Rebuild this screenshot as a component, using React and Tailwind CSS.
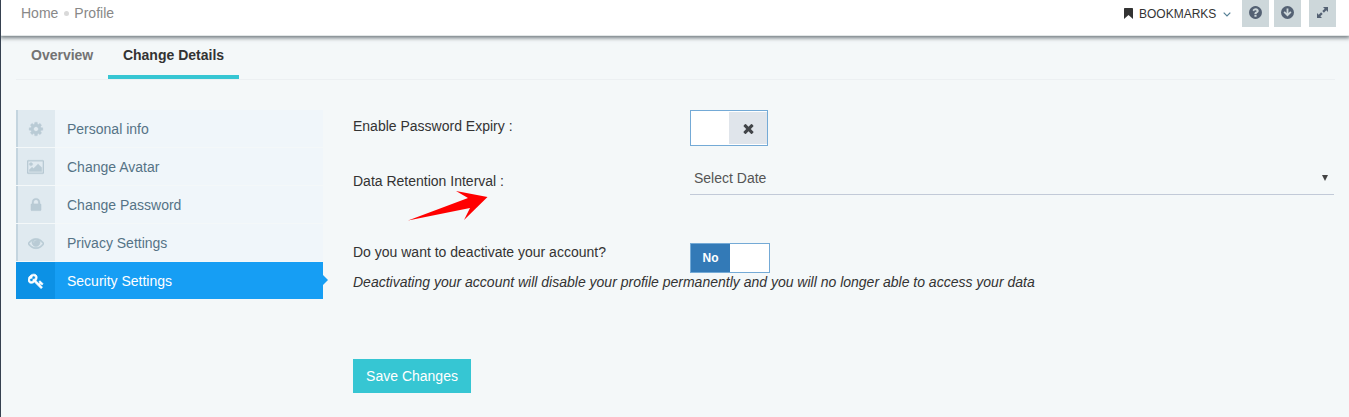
import React from "react";

const GEAR =
  "M1152 896q0-106-75-181t-181-75-181 75-75 181 75 181 181 75 181-75 75-181zm512-109v222q0 12-8 23t-20 13l-185 28q-19 54-39 91 35 50 107 138 10 12 10 25t-9 23q-27 37-99 108t-94 71q-12 0-26-9l-138-108q-44 23-91 38-16 136-29 186-7 28-36 28h-222q-14 0-24.5-8.5t-11.5-21.5l-28-184q-49-16-90-37l-141 107q-10 9-25 9-14 0-25-11-126-114-165-168-7-10-7-23 0-12 8-23 15-21 51-66.5t54-70.5q-27-50-41-99l-183-27q-13-2-21-12.5t-8-23.5v-222q0-12 8-23t19-13l186-28q14-46 39-92-40-57-107-138-10-12-10-24 0-10 9-23 26-36 98.5-107.5t94.5-71.5q13 0 26 10l138 107q44-23 91-38 16-136 29-186 7-28 36-28h222q14 0 24.5 8.5t11.5 21.5l28 184q49 16 90 37l142-107q9-9 24-9 13 0 25 10 129 119 165 170 7 8 7 22 0 12-8 23-15 21-51 66.5t-54 70.5q26 50 41 98l183 28q13 2 21 12.5t8 23.5z";
const PICTURE =
  "M576 576q0 80-56 136t-136 56-136-56-56-136 56-136 136-56 136 56 56 136zm1024 384v448h-1408v-192l320-320 160 160 512-512zm96-704h-1600q-13 0-22.5 9.5t-9.5 22.5v1216q0 13 9.5 22.5t22.5 9.5h1600q13 0 22.5-9.5t9.5-22.5v-1216q0-13-9.5-22.5t-22.5-9.5zm160 32v1216q0 66-47 113t-113 47h-1600q-66 0-113-47t-47-113v-1216q0-66 47-113t113-47h1600q66 0 113 47t47 113z";
const LOCK =
  "M640 768h512v-192q0-106-75-181t-181-75-181 75-75 181v192zm832 96v576q0 40-28 68t-68 28h-960q-40 0-68-28t-28-68v-576q0-40 28-68t68-28h32v-192q0-184 132-316t316-132 316 132 132 316v192h32q40 0 68 28t28 68z";
const EYE =
  "M1664 960q-152-236-381-353 61 104 61 225 0 185-131.5 316.5t-316.5 131.5-316.5-131.5-131.5-316.5q0-121 61-225-229 117-381 353 133 205 333.5 326.5t434.5 121.5 434.5-121.5 333.5-326.5zm-720-384q0-20-14-34t-34-14q-125 0-214.5 89.5t-89.5 214.5q0 20 14 34t34 14 34-14 14-34q0-86 61-147t147-61q20 0 34-14t14-34zm848 384q0 34-20 69-140 230-376.5 368.5t-499.5 138.5-499.5-139-376.5-368q-20-35-20-69t20-69q140-229 376.5-368t499.5-139 499.5 139 376.5 368q20 35 20 69z";
const KEY =
  "M832 512q0-80-56-136t-136-56-136 56-56 136q0 42 19 83-41-19-83-19-80 0-136 56t-56 136 56 136 136 56 136-56 56-136q0-42-19-83 41 19 83 19 80 0 136-56t56-136zm851 704q0 17-49 66t-66 49q-9 0-28.5-16t-36.5-33-38.5-40-24.5-26l-96 96 220 220q28 28 28 68 0 42-39 81t-81 39q-40 0-68-28l-671-671q-176 131-365 131-163 0-265.5-102.5t-102.5-265.5q0-160 95-313t248-248 313-95q163 0 265.5 102.5t102.5 265.5q0 189-131 365l355 355 96-96q-3-3-26-24.5t-40-38.5-33-36.5-16-28.5q0-17 49-66t66-49q13 0 23 10 6 6 46 44.5t82 79.5 86.5 86 73 78 28.5 41z";
const TIMES =
  "M1490 1322q0 40-28 68l-136 136q-28 28-68 28t-68-28l-294-294-294 294q-28 28-68 28t-68-28l-136-136q-28-28-28-68t28-68l294-294-294-294q-28-28-28-68t28-68l136-136q28-28 68-28t68 28l294 294 294-294q28-28 68-28t68 28l136 136q28 28 28 68t-28 68l-294 294 294 294q28 28 28 68z";
const QUESTION =
  "M1024 1376v-192q0-14-9-23t-23-9h-192q-14 0-23 9t-9 23v192q0 14 9 23t23 9h192q14 0 23-9t9-23zm256-672q0-88-55.5-163t-138.5-116-170-41q-243 0-371 213-15 24 8 42l132 100q7 6 19 6 16 0 25-12 53-68 86-92 34-24 86-24 48 0 85.5 26t37.5 59q0 38-20 61t-68 45q-63 28-115.5 86.5t-52.5 125.5v36q0 14 9 23t23 9h192q14 0 23-9t9-23q0-19 21.5-49.5t54.5-49.5q32-18 49-28.5t46-35 44.5-48 28-60.5 12.5-81zm384 192q0 209-103 385.5t-279.5 279.5-385.5 103-385.5-103-279.5-279.5-103-385.5 103-385.5 279.5-279.5 385.5-103 385.5 103 279.5 279.5 103 385.5z";

function Glyph({ d, className = "", box = "0 0 1792 1792", weight = 0 }) {
  return (
    <svg viewBox={box} fill="currentColor" stroke="currentColor" strokeWidth={weight} className={className} aria-hidden="true">
      <path d={d} />
    </svg>
  );
}

const MENU = [
  { label: "Personal info", d: GEAR, size: "size-4", weight: 30 },
  { label: "Change Avatar", d: PICTURE, size: "h-4 w-[17px]", box: "-64 0 1920 1792", weight: 40 },
  { label: "Change Password", d: LOCK, size: "size-4", weight: 30 },
  { label: "Privacy Settings", d: EYE, size: "size-4", weight: 70 },
  { label: "Security Settings", d: KEY, size: "size-4", weight: 90, active: true },
];

function MenuItem({ label, d, size, box, weight, active }) {
  return (
    <li
      className={
        active
          ? "relative flex h-[37px] items-center bg-[#169ef4] text-white"
          : "flex h-[37px] items-center border-l-2 border-[#c4d5df] bg-[#f0f6fa] text-[#557386]"
      }
    >
      <span
        className={
          active
            ? "flex h-full w-[39px] items-center justify-center bg-[#0c91e5]"
            : "flex h-full w-[37px] items-center justify-center bg-[#e0eaf0] pr-[2px] text-[#b9cbd5]"
        }
      >
        <Glyph d={d} box={box} weight={weight} className={size} />
      </span>
      <span className="ml-3 leading-[18px]">{label}</span>
      {active && (
        <svg viewBox="0 0 5 10" className="absolute top-[13px] left-full h-[10px] w-[5px]" aria-hidden="true">
          <path d="M0 0L5 5L0 10z" fill="#169ef4" />
        </svg>
      )}
    </li>
  );
}

function Header() {
  return (
    <header className="relative flex h-9 shrink-0 items-start justify-between border-b border-[#e3e7e8] bg-white shadow-[0_1px_4px_1px_rgba(70,80,85,0.75)]">
      <nav className="flex items-center pt-1 pl-5 text-[#888888]">
        <span className="leading-[18px]">Home</span>
        <span className="mr-[5px] ml-[6px] size-[5px] rounded-full bg-[#d9d9d9]" />
        <span className="leading-[18px]">Profile</span>
      </nav>
      <div className="flex items-start pr-[13px]">
        <svg viewBox="0 0 9 11" className="mt-[8px] h-[11px] w-[9px]" aria-hidden="true">
          <path d="M0 .7Q0 0 .7 0H8.3Q9 0 9 .7V11L4.500 7L0 11z" fill="#333333" />
        </svg>
        <span className="mt-[5px] ml-[6px] w-[78px] text-[12px] leading-[18px] whitespace-nowrap text-[#333333]">BOOKMARKS</span>
        <svg viewBox="0 0 8 5" className="mt-[12px] ml-[6px] h-[5px] w-2" fill="none" stroke="#557f95" strokeWidth="1.200" aria-hidden="true">
          <path d="M.7.7L4 4L7.300.7" />
        </svg>
        <button className="ml-[11px] flex h-[27px] w-[27px] justify-center bg-[#cdd7da] pt-[5px] text-[#546173]">
          <Glyph d={QUESTION} className="size-[15px]" />
        </button>
        <button className="ml-[5px] flex h-[27px] w-[27px] justify-center bg-[#cdd7da] pt-[6px]">
          <svg viewBox="0 0 12 12" className="size-[13px]" fill="none" aria-hidden="true">
            <circle cx="6" cy="6" r="6" fill="#546173" />
            <path d="M6 2.200V8.500M2.900 5.500L6 8.600L9.100 5.500" stroke="#cdd7da" strokeWidth="1.700" />
          </svg>
        </button>
        <button className="ml-2 flex h-[27px] w-[27px] justify-center bg-[#cdd7da] pt-[7px]">
          <svg viewBox="0 0 11 11" className="size-[11px]" aria-hidden="true">
            <path d="M6 0H11V5L9.300 3.300L6.900 5.700L5.300 4.100L7.700 1.700zM5 11H0V6L1.700 7.700L4.100 5.300L5.700 6.900L3.300 9.300z" fill="#546173" />
          </svg>
        </button>
      </div>
    </header>
  );
}

export default function App() {
  return (
    <div className="flex h-[417px] w-[1349px] flex-col overflow-hidden border-l border-[#364150] bg-[#f4f8f9] font-['Liberation_Sans',Arial,sans-serif] text-[14px] text-[#333333]">
      <Header />
      <div className="mr-[14px] ml-[15px] flex h-11 shrink-0 items-start border-b border-[#ecf0f2] font-bold">
        <div className="w-[92px] pt-[10px] pl-[15px] leading-[18px] text-[#737373]">Overview</div>
        <div className="h-[43px] w-[131px] border-b-4 border-[#36c6d3] pt-[10px] text-center leading-[18px]">Change Details</div>
      </div>
      <div className="flex pt-[30px] pl-[15px]">
        <ul className="flex w-[307px] shrink-0 flex-col gap-px">
          {MENU.map((item) => (
            <MenuItem key={item.label} {...item} />
          ))}
        </ul>
        <form className="ml-[30px] flex w-[981px] flex-col">
          <div className="flex h-[55px]">
            <label className="w-[337px] pt-[7px] leading-[18px]">Enable Password Expiry :</label>
            <div className="flex h-9 w-[78px] border border-[#74aad6] bg-white py-px">
              <span className="w-[38px]" />
              <span className="flex flex-1 items-center justify-center bg-[#e0e5eb] text-[#424549]">
                <Glyph d={TIMES} className="size-[15px]" />
              </span>
            </div>
          </div>
          <div className="flex h-[78px]">
            <label className="relative w-[337px] pt-[7px] leading-[18px]">
              Data Retention Interval :
              <svg viewBox="0 0 80 30" className="absolute top-[26px] left-[55px] h-[30px] w-20" aria-hidden="true">
                <path d="M0 29.500L60 7L48 0L79.500 6L56 29L62 17z" fill="#ff0000" />
              </svg>
            </label>
            <div className="flex h-[30px] w-[644px] justify-between border-b border-[#c2cad8] pt-1 pr-[6px] pl-1 leading-[18px] text-[#555555]">
              <span>Select Date</span>
              <svg viewBox="0 0 6 6" className="mt-[6px] size-[6px]" aria-hidden="true">
                <path d="M0 0H6L3 6z" fill="#444444" />
              </svg>
            </div>
          </div>
          <div className="flex h-[30px]">
            <label className="w-[337px] leading-[18px]">Do you want to deactivate your account?</label>
            <div className="flex h-[30px] w-20 border border-[#74aad6] bg-white">
              <span className="flex w-[39px] items-center justify-center bg-[#337ab7] text-[12px] font-bold text-white">No</span>
            </div>
          </div>
          <p className="leading-[18px] whitespace-nowrap italic">
            Deactivating your account will disable your profile permanently and you will no longer able to access your data
          </p>
          <button className="mt-[68px] h-[34px] w-[118px] bg-[#36c6d3] text-center text-white">Save Changes</button>
        </form>
      </div>
    </div>
  );
}
